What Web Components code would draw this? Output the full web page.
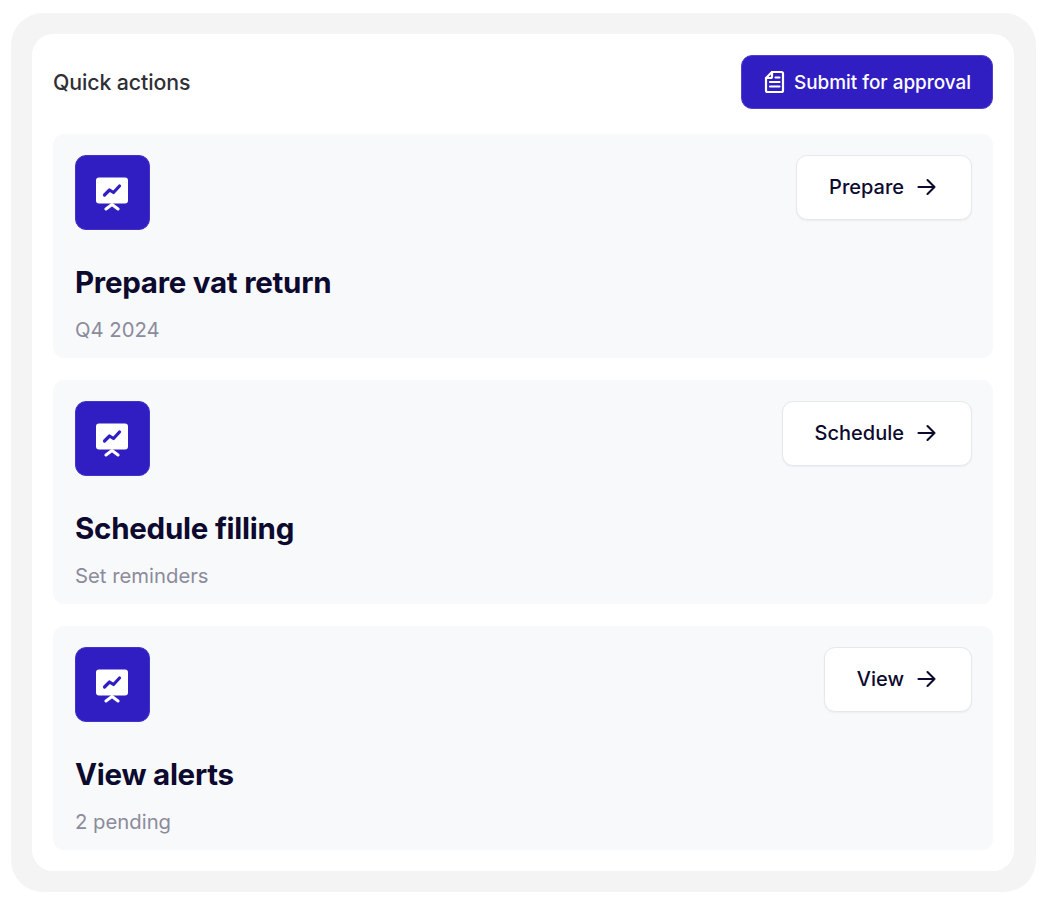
<!DOCTYPE html>
<html lang="en">
<head>
<meta charset="utf-8">
<title>Quick actions</title>
<style>
  html, body { margin: 0; background: #fff; }
  body { padding: 13px 14px 16px 11px; font-family: Inter, "Liberation Sans", sans-serif; }
</style>
</head>
<body>
<quick-actions>
  <submit-button slot="action">Submit for approval</submit-button>
  <action-card title="Prepare vat return" sub="Q4 2024" action="Prepare"></action-card>
  <action-card title="Schedule filling" sub="Set reminders" action="Schedule"></action-card>
  <action-card title="View alerts" sub="2 pending" action="View"></action-card>
</quick-actions>
<script>
class QuickActions extends HTMLElement {
  static template = (() => {
    const templateElement = document.createElement("template")
    templateElement.innerHTML = `
      <style>
        * { margin: 0; padding: 0; box-sizing: border-box; }
        :host {
          display: block;
          background: #f4f4f4;
          border-radius: 32px;
          padding: 21px 22px 21px 21px;
        }
        .panel {
          background: #fff;
          border-radius: 21px;
          padding: 21px;
          display: flex;
          flex-direction: column;
          gap: 25px;
        }
        header {
          display: flex;
          justify-content: space-between;
          align-items: center;
        }
        h2 {
          font-size: 21.3px;
          font-weight: 500;
          color: #2f3036;
          letter-spacing: -0.1px;
        }
        .list {
          display: flex;
          flex-direction: column;
          gap: 22px;
        }
      </style>
      <div class="panel">
        <header>
          <h2>Quick actions</h2>
          <slot name="action"></slot>
        </header>
        <div class="list"><slot></slot></div>
      </div>
    `
    return templateElement
  })()

  constructor() {
    super()
    const shadow = this.attachShadow({mode: "open"})
    shadow.appendChild(QuickActions.template.content.cloneNode(true))
  }
}

class SubmitButton extends HTMLElement {
  static template = (() => {
    const templateElement = document.createElement("template")
    templateElement.innerHTML = `
      <style>
        :host {
          display: flex;
          align-items: center;
          box-sizing: border-box;
          height: 54px;
          width: 252px;
          padding-left: 22px;
          gap: 9px;
          background: #311ec3;
          border: 1px solid #4f3fcf;
          border-radius: 11px;
          color: #fff;
          font-size: 18.9px;
          font-weight: 500;
        }
        svg { flex: none; display: block; }
      </style>
      <svg width="21" height="24" viewBox="0 0 21 24" fill="none" stroke="#fff" stroke-width="2.200" stroke-linecap="round" stroke-linejoin="round">
        <path d="M8 2h9.500A1.500 1.500 0 0 1 19 3.500v17a1.500 1.500 0 0 1-1.500 1.500h-14A1.500 1.500 0 0 1 2 20.500V8z"/>
        <path d="M8 2v4.500A1.500 1.500 0 0 1 6.500 8H2"/>
        <path d="M11.500 7.500h4M6 12h9.500M6 16.500h9.500"/>
      </svg>
      <span><slot></slot></span>
    `
    return templateElement
  })()

  constructor() {
    super()
    const shadow = this.attachShadow({mode: "open"})
    shadow.appendChild(SubmitButton.template.content.cloneNode(true))
  }
}

class ActionCard extends HTMLElement {
  static template = (() => {
    const templateElement = document.createElement("template")
    templateElement.innerHTML = `
      <style>
        * { margin: 0; padding: 0; box-sizing: border-box; }
        :host {
          display: block;
          box-sizing: border-box;
          height: 224px;
          background: #f8f9fb;
          border-radius: 11px;
          padding: 21px 21px 21px 22px;
        }
        .top {
          display: flex;
          justify-content: space-between;
          align-items: flex-start;
        }
        .icon {
          width: 75px;
          height: 75px;
          padding-right: 2px;
          background: #311ec3;
          border: 1px solid #4233c9;
          border-radius: 11px;
          display: flex;
          align-items: center;
          justify-content: center;
        }
        .icon svg { display: block; }
        button {
          display: flex;
          align-items: center;
          gap: 13px;
          height: 65px;
          padding: 0 35px 2px 32px;
          background: #fff;
          border: 1px solid #e7e8ee;
          border-radius: 11px;
          box-shadow: 0 1px 2px rgba(16, 16, 50, 0.05);
          font: 500 20px Inter, "Liberation Sans", sans-serif;
          color: #0c0a2e;
        }
        button svg { display: block; flex: none; }
        h3 {
          margin-top: 34px;
          font-size: 29.5px;
          line-height: 36px;
          font-weight: 700;
          letter-spacing: -0.25px;
          color: #0c0a2e;
        }
        p {
          margin-top: 17px;
          font-size: 20.3px;
          line-height: 26px;
          color: #8b8b9c;
        }
      </style>
      <div class="top">
        <div class="icon">
          <svg width="34" height="36" viewBox="0 0 34 36" fill="none">
            <rect x="1" y="2.500" width="32" height="26" rx="3" fill="#fff"/>
            <path d="M9.500 20l5-5 4 2.500 6-6.500" stroke="#311ec3" stroke-width="3.200" stroke-linecap="round" stroke-linejoin="round"/>
            <path d="M11 34l6-4.500 6 4.500" stroke="#fff" stroke-width="3" stroke-linecap="round" stroke-linejoin="round"/>
          </svg>
        </div>
        <button>
          <span class="label"></span>
          <svg width="19" height="18" viewBox="0 0 19 18" fill="none" stroke="#0c0a2e" stroke-width="2.100" stroke-linecap="round" stroke-linejoin="round">
            <path d="M1.500 9h16M10.500 2l7 7-7 7"/>
          </svg>
        </button>
      </div>
      <h3></h3>
      <p></p>
    `
    return templateElement
  })()

  constructor() {
    super()
    const shadow = this.attachShadow({mode: "open"})
    shadow.appendChild(ActionCard.template.content.cloneNode(true))
    shadow.querySelector("h3").textContent = this.getAttribute("title")
    shadow.querySelector("p").textContent = this.getAttribute("sub")
    shadow.querySelector(".label").textContent = this.getAttribute("action")
  }
}

customElements.define("quick-actions", QuickActions)
customElements.define("submit-button", SubmitButton)
customElements.define("action-card", ActionCard)
</script>
</body>
</html>
